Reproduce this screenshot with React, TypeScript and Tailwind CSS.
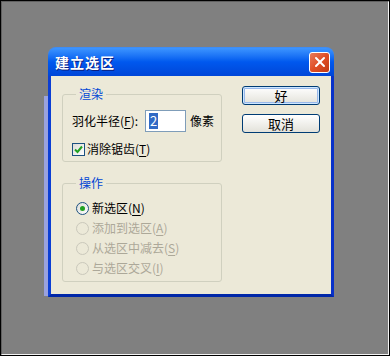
import { X } from 'lucide-react';

const font = { fontFamily: '"Noto Sans CJK SC", "Liberation Sans", sans-serif' };

// text with an underlined access key, like 羽化半径(F)
const Label = ({ text, hotkey, suffix = '' }: { text: string; hotkey: string; suffix?: string }) => (
  <span>
    {text}(<span className="underline underline-offset-2">{hotkey}</span>){suffix}
  </span>
);

const GroupBox = ({ title, height, children }: { title: string; height: string; children: React.ReactNode }) => (
  <div className={`relative border border-[#D0D0BF] rounded-[3px] ${height}`}>
    <span className="absolute -top-[9px] left-[13px] px-[3px] bg-[#ECE9D8] text-[#0046D5] leading-[16px]">
      {title}
    </span>
    {children}
  </div>
);

const Radio = ({ checked, disabled }: { checked?: boolean; disabled?: boolean }) => (
  <span
    className={`flex items-center justify-center w-[13px] h-[13px] rounded-full border ${
      disabled ? 'border-[#CAC8BB] bg-[#ECE9D8]' : 'border-[#1C5180] bg-gradient-to-br from-[#DCDCD7] to-white'
    }`}
  >
    {checked && <span className="w-[5px] h-[5px] rounded-full bg-[#21A121]" />}
  </span>
);

const XpButton = ({ label, isDefault }: { label: string; isDefault?: boolean }) => (
  <button
    className={`w-[78px] h-[19px] rounded-[3px] border border-[#003C74] bg-gradient-to-b from-white to-[#E3E2DA] text-black text-[13px] leading-[15px] ${
      isDefault ? 'shadow-[inset_0_0_0_1px_#CEE7FF,inset_0_0_0_2px_#98B8EA]' : ''
    }`}
  >
    {label}
  </button>
);

const options = [
  { text: '新选区', key: 'N', checked: true },
  { text: '添加到选区', key: 'A', disabled: true },
  { text: '从选区中减去', key: 'S', disabled: true },
  { text: '与选区交叉', key: 'I', disabled: true },
];

const App = () => {
  return (
    <div className="relative w-[390px] h-[356px] bg-[#808080] border border-black" style={font}>
      <div className="w-full h-full border border-[#f4f4f4] border-t-[#606060] border-l-[#606060] pl-[46px] pt-[45px] text-[12px] text-black">
        {/* part of a window sitting behind the dialog */}
        <div className="absolute left-[43px] top-[95px] w-[5px] h-[200px] bg-[#9AA2DE]" />
        <div className="relative w-[286px] h-[250px] flex flex-col">
          <div className="h-[29px] flex items-center justify-between pl-[7px] pr-[4px] rounded-t-[8px] bg-gradient-to-b from-[#3D95FF] via-[#0058EE] to-[#0046D8] border-t border-[#3F8CF3]">
            <span className="text-white font-bold text-[14px] tracking-[1px] [text-shadow:1px_1px_0_#0A1E80]">建立选区</span>
            <span className="w-[21px] h-[21px] rounded-[3px] border border-white bg-gradient-to-br from-[#E87A5A] via-[#E04E24] to-[#C23A14] flex items-center justify-center">
              <X size={16} strokeWidth={3} color="white" />
            </span>
          </div>
          <div className="flex-1 flex gap-[20px] bg-[#ECE9D8] border-x-[3px] border-b-[3px] border-l-[#0B3ED4] border-r-[#0831C9] border-b-[#0027A8] pl-[11px] pt-[10px]">
            <div className="w-[160px] pt-[8px] flex flex-col gap-[21px]">
              <GroupBox title="渲染" height="h-[68px]">
                <div className="flex items-center pl-[9px] pt-[15px] gap-[4px]">
                  <Label text="羽化半径" hotkey="F" suffix=":" />
                  <span className="ml-[3px] w-[41px] h-[22px] border border-[#7F9DB9] bg-white flex items-center pl-[3px]">
                    <span className="bg-[#316AC5] text-white px-[1px] leading-[16px] text-[13px]">2</span>
                  </span>
                  <span>像素</span>
                </div>
                <div className="flex items-center pl-[9px] pt-[8px] gap-[2px]">
                  <span className="w-[13px] h-[13px] border border-[#1C5180] bg-gradient-to-br from-[#DCDCD7] to-white flex items-center justify-center">
                    <svg width="9" height="9" viewBox="0 0 9 9">
                      <path d="M1 4.5 L3.5 7 L8 1.5" stroke="#21A121" strokeWidth="2" fill="none" />
                    </svg>
                  </span>
                  <Label text="消除锯齿" hotkey="T" />
                </div>
              </GroupBox>
              <GroupBox title="操作" height="h-[99px]">
                <div className="flex flex-col pl-[13px] pt-[16px] gap-[4px]">
                  {options.map((o) => (
                    <div key={o.key} className={`flex items-center gap-[3px] h-[16px] ${o.disabled ? 'text-[#ACA899]' : ''}`}>
                      <Radio checked={o.checked} disabled={o.disabled} />
                      <Label text={o.text} hotkey={o.key} />
                    </div>
                  ))}
                </div>
              </GroupBox>
            </div>
            <div className="flex flex-col gap-[9px]">
              <XpButton label="好" isDefault />
              <XpButton label="取消" />
            </div>
          </div>
        </div>
      </div>
    </div>
  );
};

export default App;
